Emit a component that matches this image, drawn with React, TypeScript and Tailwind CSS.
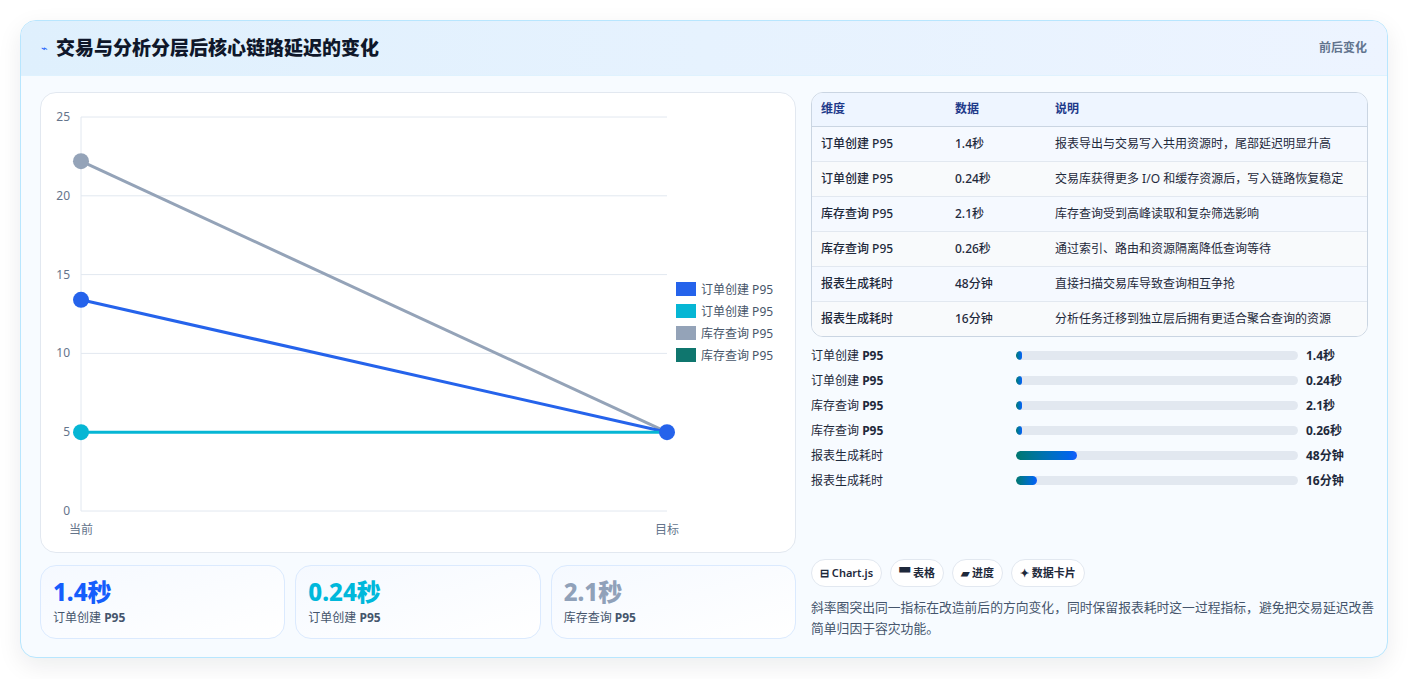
import React from 'react'

const font = { fontFamily: '"Noto Sans", "Noto Sans CJK SC", sans-serif' }

const rows = [
  ['订单创建 P95', '1.4秒', '报表导出与交易写入共用资源时，尾部延迟明显升高'],
  ['订单创建 P95', '0.24秒', '交易库获得更多 I/O 和缓存资源后，写入链路恢复稳定'],
  ['库存查询 P95', '2.1秒', '库存查询受到高峰读取和复杂筛选影响'],
  ['库存查询 P95', '0.26秒', '通过索引、路由和资源隔离降低查询等待'],
  ['报表生成耗时', '48分钟', '直接扫描交易库导致查询相互争抢'],
  ['报表生成耗时', '16分钟', '分析任务迁移到独立层后拥有更适合聚合查询的资源'],
]

const bars = [
  ['订单创建', ' P95', 2, '1.4秒'],
  ['订单创建', ' P95', 2, '0.24秒'],
  ['库存查询', ' P95', 2, '2.1秒'],
  ['库存查询', ' P95', 2, '0.26秒'],
  ['报表生成耗时', '', 21.5, '48分钟'],
  ['报表生成耗时', '', 7.3, '16分钟'],
] as const

const y = (v: number) => 418 - v * 15.76

function Chart() {
  const ticks = [0, 5, 10, 15, 20, 25]
  const legend = [
    ['#2563eb', '订单创建 P95'],
    ['#06b6d4', '订单创建 P95'],
    ['#94a3b8', '库存查询 P95'],
    ['#0f766e', '库存查询 P95'],
  ]
  return (
    <svg width="755" height="460" className="block">
      {ticks.map((t) => (
        <g key={t}>
          <line x1="40" x2="626" y1={y(t)} y2={y(t)} stroke="#e2e8f0" strokeWidth="1" />
          <text x="29" y={y(t) + 4} textAnchor="end" fontSize="12" fill="#64748b" style={font}>{t}</text>
        </g>
      ))}
      <line x1="40" x2="40" y1="24" y2="418" stroke="#e2e8f0" />
      <text x="40" y="441" textAnchor="middle" fontSize="12" fill="#64748b" style={font}>当前</text>
      <text x="626" y="441" textAnchor="middle" fontSize="12" fill="#64748b" style={font}>目标</text>
      <line x1="40" y1={y(22.2)} x2="626" y2={y(5)} stroke="#94a3b8" strokeWidth="3" />
      <line x1="40" y1={y(13.4)} x2="626" y2={y(5)} stroke="#2563eb" strokeWidth="3" />
      <line x1="40" y1={y(5)} x2="626" y2={y(5)} stroke="#06b6d4" strokeWidth="3" />
      <circle cx="40" cy={y(22.2)} r="8" fill="#94a3b8" />
      <circle cx="40" cy={y(13.4)} r="8" fill="#2563eb" />
      <circle cx="40" cy={y(5)} r="8" fill="#06b6d4" />
      <circle cx="626" cy={y(5)} r="8" fill="#2563eb" />
      {legend.map(([c, l], i) => (
        <g key={i}>
          <rect x="635" y={189 + i * 22} width="20" height="14" fill={c} />
          <text x="660" y={201 + i * 22} fontSize="12" fill="#475569" style={font}>{l}</text>
        </g>
      ))}
    </svg>
  )
}

export default function App() {
  return (
    <div className="min-h-[679px] bg-white p-5" style={font}>
      <div className="rounded-2xl border border-sky-200 bg-[#f7fbff] shadow-[0_8px_24px_rgba(15,23,42,0.08)] overflow-hidden">
        <div className="h-[55px] px-5 flex items-center justify-between bg-gradient-to-r from-[#dff0fd] to-[#edf4ff] border-b border-sky-100">
          <div className="flex items-center gap-2">
            <span className="text-[11px] text-blue-600">⌁</span>
            <span className="text-[19px] font-extrabold text-[#0f172a]">交易与分析分层后核心链路延迟的变化</span>
          </div>
          <span className="text-xs font-semibold text-slate-500">前后变化</span>
        </div>
        <div className="px-[19px] pt-4 pb-[18px] flex gap-[15px]">
          <div className="w-[756px] flex flex-col gap-3">
            <div className="rounded-2xl border border-slate-200 bg-white h-[461px] overflow-hidden">
              <Chart />
            </div>
            <div className="grid grid-cols-3 gap-[10px]">
              {[
                ['1.4秒', 'text-blue-600', '订单创建'],
                ['0.24秒', 'text-cyan-500', '订单创建'],
                ['2.1秒', 'text-slate-400', '库存查询'],
              ].map(([v, c, l], i) => (
                <div key={i} className="rounded-2xl border border-blue-100 bg-gradient-to-br from-[#f5f9ff] to-white h-[74px] px-3 pt-3">
                  <div className={`text-[24px] font-extrabold leading-7 ${c}`}>{v}</div>
                  <div className="text-xs text-slate-600 mt-1">{l} <b>P95</b></div>
                </div>
              ))}
            </div>
          </div>
          <div className="flex-1 flex flex-col">
            <div className="rounded-xl border border-slate-300 overflow-hidden bg-white">
              <table className="w-full text-xs text-[#1e293b]">
                <thead>
                  <tr className="bg-[#eef5ff] text-[#1e3a8a] h-[33px] border-b border-slate-300">
                    <th className="text-left font-semibold pl-[9px] w-[143px]">维度</th>
                    <th className="text-left font-semibold w-[100px]">数据</th>
                    <th className="text-left font-semibold">说明</th>
                  </tr>
                </thead>
                <tbody>
                  {rows.map((r, i) => (
                    <tr key={i} className={`h-[35px] ${i < 5 ? 'border-b border-slate-200' : ''} ${i % 2 ? 'bg-[#f8fafc]' : 'bg-[#f5f9ff]'}`}>
                      <td className="pl-[9px] font-medium">{r[0]}</td>
                      <td className="font-medium">{r[1]}</td>
                      <td>{r[2]}</td>
                    </tr>
                  ))}
                </tbody>
              </table>
            </div>
            <div className="mt-[6px] flex flex-col">
              {bars.map(([a, b, w, v], i) => (
                <div key={i} className="h-[25px] flex items-center text-xs text-[#1e293b]">
                  <span className="w-[205px] shrink-0">{a}<b>{b}</b></span>
                  <div className="w-[282px] h-[9px] rounded-full bg-slate-200 overflow-hidden">
                    <div className="h-full rounded-full bg-gradient-to-r from-teal-700 to-blue-600" style={{ width: `${w}%` }} />
                  </div>
                  <span className="ml-2 font-bold">{v}</span>
                </div>
              ))}
            </div>
            <div className="mt-auto">
              <div className="flex gap-2">
                {['⊟ Chart.js', '▀ 表格', '▰ 进度', '✦ 数据卡片'].map((t) => (
                  <span key={t} className="rounded-full border border-slate-200 bg-white px-2 h-7 flex items-center text-[11px] font-semibold text-[#1e293b]">{t}</span>
                ))}
              </div>
              <p className="mt-[10px] -mr-2 text-[12.8px] leading-[21px] text-slate-600">斜率图突出同一指标在改造前后的方向变化，同时保留报表耗时这一过程指标，避免把交易延迟改善简单归因于容灾功能。</p>
            </div>
          </div>
        </div>
      </div>
    </div>
  )
}
